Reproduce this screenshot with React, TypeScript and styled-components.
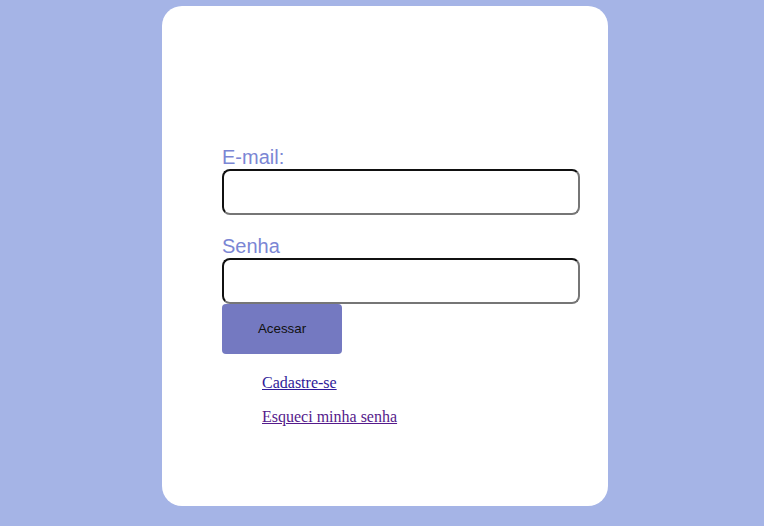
import React from "react";
import styled, { createGlobalStyle } from "styled-components";

const Global = createGlobalStyle`
  html, body { margin: 0; padding: 0; background: #a5b4e6; }
  body { font-family: "Liberation Serif", serif; }
`;

const Page = styled.div`
  min-height: 526px;
  box-sizing: border-box;
  padding: 6px 0 0 162px;
`;

const Card = styled.div`
  width: 446px;
  height: 500px;
  box-sizing: border-box;
  background: #ffffff;
  border-radius: 20px;
  padding: 140px 28px 0 60px;
`;

const Form = styled.form`
  display: flex;
  flex-direction: column;
  align-items: flex-start;
`;

const Label = styled.label<{ $gapTop?: boolean }>`
  font-family: "Liberation Sans", Arial, sans-serif;
  font-size: 20px;
  line-height: 23px;
  color: #7b86d4;
  margin-top: ${(p) => (p.$gapTop ? "20px" : "0")};
`;

const Input = styled.input`
  width: 358px;
  height: 46px;
  box-sizing: border-box;
  border-style: solid;
  border-width: 2px;
  border-color: #111111 #767676 #767676 #111111;
  border-radius: 8px;
  background: #ffffff;
  outline: none;
  padding: 0 8px;
  font-size: 16px;
`;

const Button = styled.button`
  width: 120px;
  height: 50px;
  border: none;
  border-radius: 4px;
  background: #7479c1;
  color: #111111;
  font-family: "Liberation Sans", Arial, sans-serif;
  font-size: 13.33px;
  line-height: 15px;
  padding: 0 0 2px;
  cursor: pointer;
`;

const Links = styled.ul`
  list-style: none;
  margin: 20px 0 0;
  padding: 0 0 0 40px;
`;

const Item = styled.li`
  font-size: 16px;
  line-height: 18px;
  margin-bottom: 16px;
`;

const Link = styled.a<{ $visited?: boolean }>`
  color: ${(p) => (p.$visited ? "#551a8b" : "#2f1a99")};
  text-decoration: underline;
`;

export default function App() {
  return (
    <>
      <Global />
      <Page>
        <Card>
          <Form onSubmit={(e) => e.preventDefault()}>
            <Label htmlFor="email">E-mail:</Label>
            <Input id="email" type="email" />
            <Label htmlFor="senha" $gapTop>
              Senha
            </Label>
            <Input id="senha" type="password" />
            <Button type="submit">Acessar</Button>
          </Form>
          <Links>
            <Item>
              <Link href="#cadastro">Cadastre-se</Link>
            </Item>
            <Item>
              <Link href="#senha" $visited>
                Esqueci minha senha
              </Link>
            </Item>
          </Links>
        </Card>
      </Page>
    </>
  );
}
